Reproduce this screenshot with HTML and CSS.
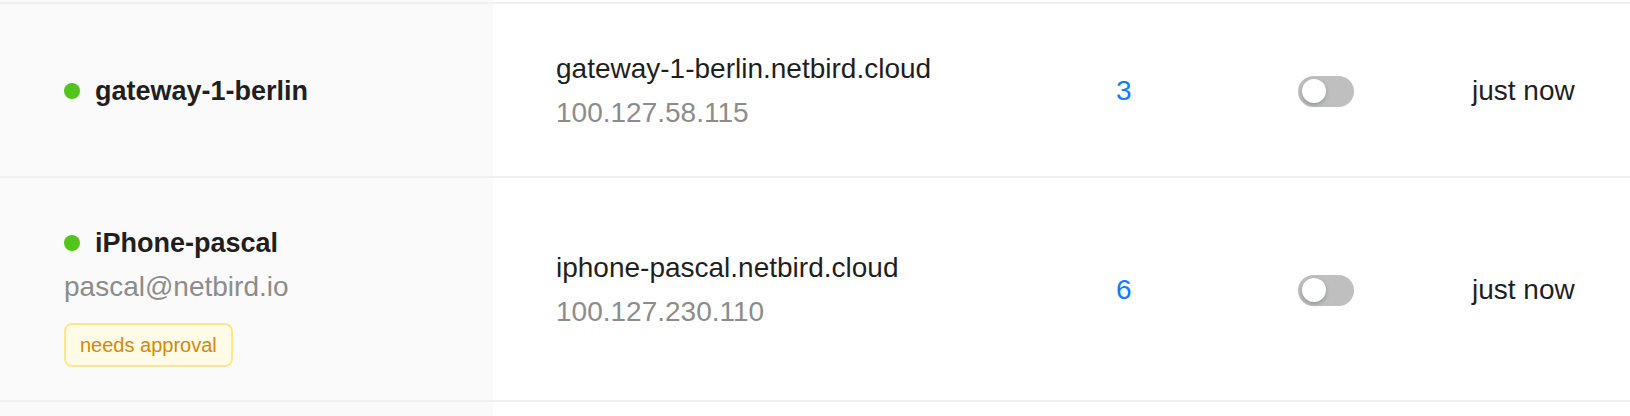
FILE: index.html
```html
<!DOCTYPE html>
<html lang="en">
<head>
<meta charset="utf-8">
<title>Peers</title>
<link rel="stylesheet" href="styles.css">
</head>
<body>
<div class="table">
  <div class="row row-edge">
    <div class="cell peer"></div>
    <div class="cell"></div>
  </div>

  <div class="row">
    <div class="cell peer">
      <div class="name-line"><span class="dot"></span><span class="name">gateway-1-berlin</span></div>
    </div>
    <div class="cell address">
      <div class="domain">gateway-1-berlin.netbird.cloud</div>
      <div class="ip">100.127.58.115</div>
    </div>
    <div class="cell"><span class="count">3</span></div>
    <div class="cell"><span class="switch"><span class="knob"></span></span></div>
    <div class="cell"><span class="seen">just now</span></div>
  </div>

  <div class="row">
    <div class="cell peer">
      <div class="name-line"><span class="dot"></span><span class="name">iPhone-pascal</span></div>
      <div class="user">pascal@netbird.io</div>
      <span class="tag">needs approval</span>
    </div>
    <div class="cell address">
      <div class="domain">iphone-pascal.netbird.cloud</div>
      <div class="ip">100.127.230.110</div>
    </div>
    <div class="cell"><span class="count">6</span></div>
    <div class="cell"><span class="switch"><span class="knob"></span></span></div>
    <div class="cell"><span class="seen">just now</span></div>
  </div>

  <div class="row row-next">
    <div class="cell peer"></div>
    <div class="cell"></div>
  </div>
</div>
</body>
</html>
```

FILE: styles.css
```css
html, body {
  margin: 0;
  padding: 0;
  background: #ffffff;
  overflow: hidden;
  height: 416px;
}

body {
  font-family: "Liberation Sans", Arial, sans-serif;
  color: #1f1f1f;
  font-size: 28px;
  line-height: 44px;
}

.table {
  display: flex;
  flex-direction: column;
}

.row {
  display: grid;
  grid-template-columns: 493px 623px 182px 174px 1fr;
  border-top: 2px solid #f0f0f0;
}

.row-edge {
  border-top: none;
  height: 2px;
  grid-template-columns: 493px 1fr;
}

.row-next {
  height: 14px;
  grid-template-columns: 493px 1fr;
}

.cell {
  display: flex;
  flex-direction: column;
  justify-content: center;
  align-items: flex-start;
  padding: 43px 0 41px;
}

.row-edge .cell,
.row-next .cell {
  padding: 0;
}

.peer {
  background: #fafafa;
  padding-left: 64px;
}

.address {
  padding-left: 63px;
}

.name-line {
  display: flex;
  align-items: center;
  gap: 15px;
}

.dot {
  width: 16px;
  height: 16px;
  border-radius: 50%;
  background: #52c41a;
  flex: none;
}

.name {
  font-weight: 700;
  font-size: 27px;
}

.user,
.ip {
  color: #8c8c8c;
}

.tag {
  margin-top: 14px;
  margin-bottom: -8px;
  display: inline-block;
  font-size: 20px;
  line-height: 40px;
  padding: 0 14px;
  color: #d48806;
  background: #fffbe6;
  border: 2px solid #ffe58f;
  border-radius: 8px;
}

.count {
  color: #1677ff;
}

.switch {
  position: relative;
  display: block;
  width: 56px;
  height: 31px;
  border-radius: 16px;
  background: #bfbfbf;
  margin-top: 1px;
}

.knob {
  position: absolute;
  left: 4px;
  top: 3px;
  width: 24px;
  height: 24px;
  border-radius: 50%;
  background: #ffffff;
  box-shadow: 0 2px 4px rgba(0, 35, 11, 0.25);
}
```
